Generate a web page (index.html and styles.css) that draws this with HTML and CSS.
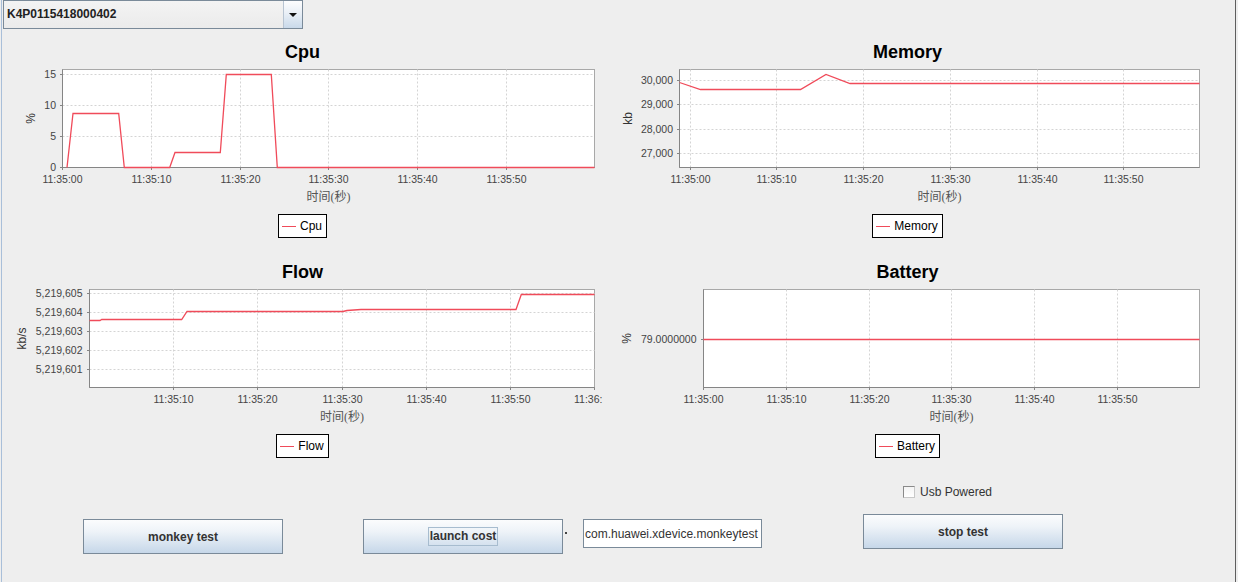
FILE: index.html
```html
<!DOCTYPE html>
<html lang="zh">
<head>
<meta charset="utf-8">
<title>Monitor</title>
<link rel="stylesheet" href="styles.css">
</head>
<body>
<div class="app">
  <div class="combo">
    <div class="combo-value">K4P0115418000402</div>
    <div class="combo-btn"><svg width="8" height="4" viewBox="0 0 8 4"><path d="M0 0H8L4 4Z" fill="#111"/></svg></div>
  </div>

  <div class="charts">
    <!-- CPU -->
    <section class="panel">
      <h2 class="chart-title">Cpu</h2>
      <svg class="chart" width="605" height="144" viewBox="0 0 605 144">
        <rect class="plot" x="62.5" y="7.5" width="532" height="98"/>
        <g class="grid">
          <line x1="62.5" x2="594.5" y1="74.5" y2="74.5"/>
          <line x1="62.5" x2="594.5" y1="43.5" y2="43.5"/>
          <line x1="62.5" x2="594.5" y1="12.5" y2="12.5"/>
          <line x1="151.5" x2="151.5" y1="7.5" y2="105.5"/>
          <line x1="240.5" x2="240.5" y1="7.5" y2="105.5"/>
          <line x1="328.5" x2="328.5" y1="7.5" y2="105.5"/>
          <line x1="417.5" x2="417.5" y1="7.5" y2="105.5"/>
          <line x1="506.5" x2="506.5" y1="7.5" y2="105.5"/>
        </g>
        <g class="axis">
          <line x1="62.5" x2="62.5" y1="7.5" y2="105.5"/>
          <line x1="62.5" x2="594.5" y1="105.5" y2="105.5"/>
          <line x1="60" x2="62.5" y1="105.5" y2="105.5"/>
          <line x1="60" x2="62.5" y1="74.5" y2="74.5"/>
          <line x1="60" x2="62.5" y1="43.5" y2="43.5"/>
          <line x1="60" x2="62.5" y1="12.5" y2="12.5"/>
          <line x1="62.5" x2="62.5" y1="105.5" y2="108"/>
          <line x1="151.5" x2="151.5" y1="105.5" y2="108"/>
          <line x1="240.5" x2="240.5" y1="105.5" y2="108"/>
          <line x1="328.5" x2="328.5" y1="105.5" y2="108"/>
          <line x1="417.5" x2="417.5" y1="105.5" y2="108"/>
          <line x1="506.5" x2="506.5" y1="105.5" y2="108"/>
        </g>
        <g class="ytick">
          <text x="56" y="109.3">0</text>
          <text x="56" y="78.3">5</text>
          <text x="56" y="47.3">10</text>
          <text x="56" y="16.3">15</text>
        </g>
        <g class="xtick">
          <text x="62.5" y="121">11:35:00</text>
          <text x="151.5" y="121">11:35:10</text>
          <text x="240.5" y="121">11:35:20</text>
          <text x="328.5" y="121">11:35:30</text>
          <text x="417.5" y="121">11:35:40</text>
          <text x="506.5" y="121">11:35:50</text>
        </g>
        <polyline class="series" points="67,105.5 73,51.5 118.7,51.5 124.3,105.5 169.7,105.5 175,90.5 220.3,90.5 226.3,12.5 271.3,12.5 277.3,105.5 594.5,105.5"/>
        <text class="ylabel" transform="translate(30.5 56.5) rotate(-90)">%</text>
        <text class="xlabel" x="328.5" y="139">时间(秒)</text>
      </svg>
      <div class="legend"><span class="swatch"></span>Cpu</div>
    </section>

    <!-- Memory -->
    <section class="panel">
      <h2 class="chart-title">Memory</h2>
      <svg class="chart" width="605" height="144" viewBox="0 0 605 144">
        <rect class="plot" x="74.5" y="7.5" width="520" height="98"/>
        <g class="grid">
          <line x1="74.5" x2="594.5" y1="18.5" y2="18.5"/>
          <line x1="74.5" x2="594.5" y1="42.5" y2="42.5"/>
          <line x1="74.5" x2="594.5" y1="67.5" y2="67.5"/>
          <line x1="74.5" x2="594.5" y1="91.5" y2="91.5"/>
          <line x1="85.5" x2="85.5" y1="7.5" y2="105.5"/>
          <line x1="171.5" x2="171.5" y1="7.5" y2="105.5"/>
          <line x1="258.5" x2="258.5" y1="7.5" y2="105.5"/>
          <line x1="345.5" x2="345.5" y1="7.5" y2="105.5"/>
          <line x1="432.5" x2="432.5" y1="7.5" y2="105.5"/>
          <line x1="518.5" x2="518.5" y1="7.5" y2="105.5"/>
        </g>
        <g class="axis">
          <line x1="74.5" x2="74.5" y1="7.5" y2="105.5"/>
          <line x1="74.5" x2="594.5" y1="105.5" y2="105.5"/>
          <line x1="72" x2="74.5" y1="18.5" y2="18.5"/>
          <line x1="72" x2="74.5" y1="42.5" y2="42.5"/>
          <line x1="72" x2="74.5" y1="67.5" y2="67.5"/>
          <line x1="72" x2="74.5" y1="91.5" y2="91.5"/>
          <line x1="85.5" x2="85.5" y1="105.5" y2="108"/>
          <line x1="171.5" x2="171.5" y1="105.5" y2="108"/>
          <line x1="258.5" x2="258.5" y1="105.5" y2="108"/>
          <line x1="345.5" x2="345.5" y1="105.5" y2="108"/>
          <line x1="432.5" x2="432.5" y1="105.5" y2="108"/>
          <line x1="518.5" x2="518.5" y1="105.5" y2="108"/>
        </g>
        <g class="ytick">
          <text x="68" y="22.3">30,000</text>
          <text x="68" y="46.3">29,000</text>
          <text x="68" y="71.3">28,000</text>
          <text x="68" y="95.3">27,000</text>
        </g>
        <g class="xtick">
          <text x="85.5" y="121">11:35:00</text>
          <text x="171.5" y="121">11:35:10</text>
          <text x="258.5" y="121">11:35:20</text>
          <text x="345.5" y="121">11:35:30</text>
          <text x="432.5" y="121">11:35:40</text>
          <text x="518.5" y="121">11:35:50</text>
        </g>
        <polyline class="series" points="74.5,20.5 95.5,27.5 195.5,27.5 221,12.5 245,21.5 594.5,21.5"/>
        <text class="ylabel" transform="translate(23 56.5) rotate(-90)">kb</text>
        <text class="xlabel" x="334.5" y="139">时间(秒)</text>
      </svg>
      <div class="legend"><span class="swatch"></span>Memory</div>
    </section>

    <!-- Flow -->
    <section class="panel">
      <h2 class="chart-title">Flow</h2>
      <svg class="chart" width="605" height="144" viewBox="0 0 605 144">
        <rect class="plot" x="89.5" y="7.5" width="505" height="98"/>
        <g class="grid">
          <line x1="89.5" x2="594.5" y1="11.5" y2="11.5"/>
          <line x1="89.5" x2="594.5" y1="30.5" y2="30.5"/>
          <line x1="89.5" x2="594.5" y1="49.5" y2="49.5"/>
          <line x1="89.5" x2="594.5" y1="68.5" y2="68.5"/>
          <line x1="89.5" x2="594.5" y1="87.5" y2="87.5"/>
          <line x1="173.5" x2="173.5" y1="7.5" y2="105.5"/>
          <line x1="257.5" x2="257.5" y1="7.5" y2="105.5"/>
          <line x1="342.5" x2="342.5" y1="7.5" y2="105.5"/>
          <line x1="426.5" x2="426.5" y1="7.5" y2="105.5"/>
          <line x1="510.5" x2="510.5" y1="7.5" y2="105.5"/>
        </g>
        <g class="axis">
          <line x1="89.5" x2="89.5" y1="7.5" y2="105.5"/>
          <line x1="89.5" x2="594.5" y1="105.5" y2="105.5"/>
          <line x1="87" x2="89.5" y1="11.5" y2="11.5"/>
          <line x1="87" x2="89.5" y1="30.5" y2="30.5"/>
          <line x1="87" x2="89.5" y1="49.5" y2="49.5"/>
          <line x1="87" x2="89.5" y1="68.5" y2="68.5"/>
          <line x1="87" x2="89.5" y1="87.5" y2="87.5"/>
          <line x1="173.5" x2="173.5" y1="105.5" y2="108"/>
          <line x1="257.5" x2="257.5" y1="105.5" y2="108"/>
          <line x1="342.5" x2="342.5" y1="105.5" y2="108"/>
          <line x1="426.5" x2="426.5" y1="105.5" y2="108"/>
          <line x1="510.5" x2="510.5" y1="105.5" y2="108"/>
          <line x1="594.5" x2="594.5" y1="105.5" y2="108"/>
        </g>
        <g class="ytick">
          <text x="82.5" y="15.3">5,219,605</text>
          <text x="82.5" y="34.3">5,219,604</text>
          <text x="82.5" y="53.3">5,219,603</text>
          <text x="82.5" y="72.3">5,219,602</text>
          <text x="82.5" y="91.3">5,219,601</text>
        </g>
        <g class="xtick">
          <text x="173.5" y="121">11:35:10</text>
          <text x="257.5" y="121">11:35:20</text>
          <text x="342.5" y="121">11:35:30</text>
          <text x="426.5" y="121">11:35:40</text>
          <text x="510.5" y="121">11:35:50</text>
          <text class="start" x="574" y="121">11:36:</text>
        </g>
        <polyline class="series" points="89.5,38.5 100,38.5 101.7,37.5 181.7,37.5 187,29.5 343,29.5 347,28.5 361,27.5 516,27.5 521.3,12.5 594.5,12.5"/>
        <text class="ylabel" transform="translate(21.5 56.5) rotate(-90)">kb/s</text>
        <text class="xlabel" x="342" y="139">时间(秒)</text>
      </svg>
      <div class="legend"><span class="swatch"></span>Flow</div>
    </section>

    <!-- Battery -->
    <section class="panel">
      <h2 class="chart-title">Battery</h2>
      <svg class="chart" width="605" height="144" viewBox="0 0 605 144">
        <rect class="plot" x="98.5" y="7.5" width="496" height="98"/>
        <g class="grid">
          <line x1="181.5" x2="181.5" y1="7.5" y2="105.5"/>
          <line x1="264.5" x2="264.5" y1="7.5" y2="105.5"/>
          <line x1="346.5" x2="346.5" y1="7.5" y2="105.5"/>
          <line x1="429.5" x2="429.5" y1="7.5" y2="105.5"/>
          <line x1="512.5" x2="512.5" y1="7.5" y2="105.5"/>
        </g>
        <g class="axis">
          <line x1="98.5" x2="98.5" y1="7.5" y2="105.5"/>
          <line x1="98.5" x2="594.5" y1="105.5" y2="105.5"/>
          <line x1="96" x2="98.5" y1="57.5" y2="57.5"/>
          <line x1="98.5" x2="98.5" y1="105.5" y2="108"/>
          <line x1="181.5" x2="181.5" y1="105.5" y2="108"/>
          <line x1="264.5" x2="264.5" y1="105.5" y2="108"/>
          <line x1="346.5" x2="346.5" y1="105.5" y2="108"/>
          <line x1="429.5" x2="429.5" y1="105.5" y2="108"/>
          <line x1="512.5" x2="512.5" y1="105.5" y2="108"/>
        </g>
        <g class="ytick">
          <text x="91.5" y="61.3">79.0000000</text>
        </g>
        <g class="xtick">
          <text x="98.5" y="121">11:35:00</text>
          <text x="181.5" y="121">11:35:10</text>
          <text x="264.5" y="121">11:35:20</text>
          <text x="346.5" y="121">11:35:30</text>
          <text x="429.5" y="121">11:35:40</text>
          <text x="512.5" y="121">11:35:50</text>
        </g>
        <polyline class="series" points="98.5,57.5 594.5,57.5"/>
        <text class="ylabel" transform="translate(21.5 56.5) rotate(-90)">%</text>
        <text class="xlabel" x="346.5" y="139">时间(秒)</text>
      </svg>
      <div class="legend"><span class="swatch"></span>Battery</div>
    </section>
  </div>

  <div class="controls">
    <button class="btn btn-monkey" type="button">monkey test</button>
    <button class="btn btn-launch" type="button"><span class="focus">launch cost</span></button>
    <span class="dot"></span>
    <input class="pkg" type="text" value="com.huawei.xdevice.monkeytest">
    <div class="stop-col">
      <label class="check"><span class="box"></span>Usb Powered</label>
      <button class="btn btn-stop" type="button">stop test</button>
    </div>
  </div>
</div>
</body>
</html>
```

FILE: styles.css
```css
html, body {
  margin: 0;
  padding: 0;
}

body {
  width: 1238px;
  height: 582px;
  overflow: hidden;
  font-family: "Liberation Sans", Arial, sans-serif;
  background: linear-gradient(90deg,
    #eeeeee 0 1px,
    #a9bfd9 1px 2px,
    #eeeeee 2px 1235px,
    #5e5e5e 1235px 1236px,
    #eeeeee 1236px);
}

.app {
  height: 582px;
}

/* ---------- combo box ---------- */
.combo {
  margin-left: 3px;
  width: 300px;
  height: 29px;
  box-sizing: border-box;
  border: 1px solid #7a8a99;
  display: flex;
  background: linear-gradient(#f3f3f3, #ebebeb);
}

.combo-value {
  flex: 1;
  padding-left: 3px;
  font-size: 12px;
  font-weight: bold;
  line-height: 26px;
  color: #222;
}

.combo-btn {
  width: 18px;
  border-left: 1px solid #b8c4d2;
  display: flex;
  align-items: center;
  justify-content: center;
  background: linear-gradient(#fdfdfe 0%, #e9eff6 45%, #c9d9ea 100%);
}

/* ---------- charts ---------- */
.charts {
  margin-top: 7px;
  display: grid;
  grid-template-columns: 605px 605px;
  grid-auto-rows: 220px;
}

.panel {
  display: flex;
  flex-direction: column;
  align-items: center;
}

.chart-title {
  margin: 0;
  padding-top: 7px;
  font-size: 18px;
  line-height: 19px;
  font-weight: bold;
  color: #000;
}

.chart {
  display: block;
  flex-shrink: 0;
  overflow: hidden;
}

.plot {
  fill: #ffffff;
  stroke: #a8a8a8;
  stroke-width: 1;
}

.grid line {
  stroke: #d4d4d4;
  stroke-width: 1;
  stroke-dasharray: 2 2;
}

.axis line {
  stroke: #858585;
  stroke-width: 1;
}

.ytick text,
.xtick text {
  font-family: "Liberation Sans", Arial, sans-serif;
  font-size: 10.5px;
  fill: #444;
}

.ytick text { text-anchor: end; }
.xtick text { text-anchor: middle; }
.xtick text.start { text-anchor: start; }

.series {
  fill: none;
  stroke: #f04b5a;
  stroke-width: 1.3;
}

.ylabel {
  font-family: "Liberation Sans", Arial, sans-serif;
  font-size: 12px;
  fill: #333;
  text-anchor: middle;
  dominant-baseline: central;
}

.xlabel {
  font-family: "Liberation Serif", "Noto Sans CJK SC", serif;
  font-size: 12px;
  fill: #555;
  text-anchor: middle;
}

.legend {
  margin-top: 8px;
  height: 24px;
  box-sizing: border-box;
  border: 1px solid #000;
  background: #fff;
  display: inline-flex;
  align-items: center;
  padding: 0 4px 0 3px;
  font-size: 12px;
  color: #000;
}

.swatch {
  width: 14px;
  height: 1px;
  background: #f04b5a;
  margin-right: 4px;
}

/* ---------- controls ---------- */
.controls {
  display: flex;
  align-items: flex-start;
  padding-left: 83px;
}

.btn {
  margin: 0;
  padding: 0;
  width: 200px;
  height: 35px;
  box-sizing: border-box;
  border: 1px solid #7a8a99;
  border-radius: 0;
  background: linear-gradient(#fbfcfd 0%, #eef3f8 35%, #c6d7e9 100%);
  font-family: "Liberation Sans", Arial, sans-serif;
  font-size: 12px;
  font-weight: bold;
  color: #333;
  display: flex;
  align-items: center;
  justify-content: center;
}

.btn-monkey,
.btn-launch {
  margin-top: 43px;
}

.btn-launch {
  margin-left: 80px;
}

.focus {
  border: 1px solid #a7bccf;
  padding: 1px 1px;
  line-height: 15px;
}

.dot {
  width: 2px;
  height: 2px;
  background: #444;
  margin-top: 56px;
  margin-left: 2px;
}

.pkg {
  margin: 43px 0 0 16px;
  width: 179px;
  height: 29px;
  box-sizing: border-box;
  border: 1px solid #7a8a99;
  border-radius: 0;
  padding: 0 0 0 1px;
  background: #fff;
  font-family: "Liberation Sans", Arial, sans-serif;
  font-size: 12px;
  color: #333;
  outline: none;
}

.stop-col {
  margin-left: 101px;
  width: 200px;
  display: flex;
  flex-direction: column;
}

.check {
  margin-top: 9px;
  padding-left: 40px;
  height: 14px;
  display: flex;
  align-items: center;
  font-size: 12px;
  color: #333;
}

.box {
  width: 12px;
  height: 12px;
  box-sizing: border-box;
  border: 1px solid #8a8a8a;
  border-right-color: #c8c8c8;
  border-bottom-color: #c8c8c8;
  background: linear-gradient(#f4f4f4, #ffffff);
  margin-right: 5px;
}

.btn-stop {
  margin-top: 15px;
}
```
